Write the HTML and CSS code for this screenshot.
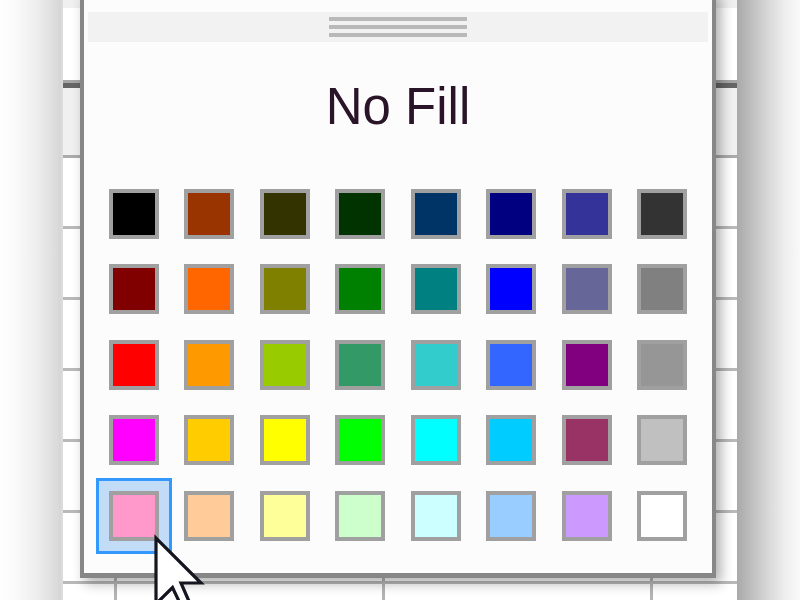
FILE: index.html
```html
<!DOCTYPE html>
<html>
<head>
<meta charset="utf-8">
<link rel="stylesheet" href="styles.css">
</head>
<body>
<div class="screen">
  <div class="shade-left"></div>
  <div class="sheet">
    <div class="band-top"></div>
    <div class="band-white"></div>
    <div class="header-line"></div>
    <div class="header"></div>
    <div class="row"></div>
    <div class="row"></div>
    <div class="row"></div>
    <div class="row"></div>
    <div class="row"></div>
    <div class="row"></div>
    <div class="row"></div>

    <div class="popup">
      <div class="handle">
        <span class="grip"></span>
        <span class="grip"></span>
        <span class="grip"></span>
      </div>
      <div class="nofill">No Fill</div>
      <div class="palette">
        <div class="cell"><span class="sw" style="background:#000000"></span></div>
        <div class="cell"><span class="sw" style="background:#993300"></span></div>
        <div class="cell"><span class="sw" style="background:#333300"></span></div>
        <div class="cell"><span class="sw" style="background:#003300"></span></div>
        <div class="cell"><span class="sw" style="background:#003366"></span></div>
        <div class="cell"><span class="sw" style="background:#000080"></span></div>
        <div class="cell"><span class="sw" style="background:#333399"></span></div>
        <div class="cell"><span class="sw" style="background:#333333"></span></div>

        <div class="cell"><span class="sw" style="background:#800000"></span></div>
        <div class="cell"><span class="sw" style="background:#ff6600"></span></div>
        <div class="cell"><span class="sw" style="background:#808000"></span></div>
        <div class="cell"><span class="sw" style="background:#008000"></span></div>
        <div class="cell"><span class="sw" style="background:#008080"></span></div>
        <div class="cell"><span class="sw" style="background:#0000ff"></span></div>
        <div class="cell"><span class="sw" style="background:#666699"></span></div>
        <div class="cell"><span class="sw" style="background:#808080"></span></div>

        <div class="cell"><span class="sw" style="background:#ff0000"></span></div>
        <div class="cell"><span class="sw" style="background:#ff9900"></span></div>
        <div class="cell"><span class="sw" style="background:#99cc00"></span></div>
        <div class="cell"><span class="sw" style="background:#339966"></span></div>
        <div class="cell"><span class="sw" style="background:#33cccc"></span></div>
        <div class="cell"><span class="sw" style="background:#3366ff"></span></div>
        <div class="cell"><span class="sw" style="background:#800080"></span></div>
        <div class="cell"><span class="sw" style="background:#969696"></span></div>

        <div class="cell"><span class="sw" style="background:#ff00ff"></span></div>
        <div class="cell"><span class="sw" style="background:#ffcc00"></span></div>
        <div class="cell"><span class="sw" style="background:#ffff00"></span></div>
        <div class="cell"><span class="sw" style="background:#00ff00"></span></div>
        <div class="cell"><span class="sw" style="background:#00ffff"></span></div>
        <div class="cell"><span class="sw" style="background:#00ccff"></span></div>
        <div class="cell"><span class="sw" style="background:#993366"></span></div>
        <div class="cell"><span class="sw" style="background:#c0c0c0"></span></div>

        <div class="cell selected"><span class="sw" style="background:#ff99cc"></span></div>
        <div class="cell"><span class="sw" style="background:#ffcc99"></span></div>
        <div class="cell"><span class="sw" style="background:#ffff99"></span></div>
        <div class="cell"><span class="sw" style="background:#ccffcc"></span></div>
        <div class="cell"><span class="sw" style="background:#ccffff"></span></div>
        <div class="cell"><span class="sw" style="background:#99ccff"></span></div>
        <div class="cell"><span class="sw" style="background:#cc99ff"></span></div>
        <div class="cell"><span class="sw" style="background:#ffffff"></span></div>
      </div>
    </div>
  </div>
  <div class="shade-right"></div>
</div>

<svg class="cursor" width="60" height="80" viewBox="0 0 60 80">
  <polygon points="2,2 2,68 18.5,51.5 31,78 39,74.5 27,47 47,47" fill="#ffffff" stroke="#15151f" stroke-width="3.2" stroke-linejoin="miter"/>
</svg>
</body>
</html>
```

FILE: styles.css
```css
html, body {
  margin: 0;
  padding: 0;
  width: 800px;
  height: 600px;
  overflow: hidden;
  background: #ffffff;
}

.screen {
  display: flex;
  width: 800px;
  height: 600px;
  overflow: hidden;
}

.shade-left {
  width: 63px;
  flex: none;
  background: linear-gradient(to right, #fefefe 0, #fbfbfb 14px, #eeeeee 36px, #dcdcdc 56px, #d6d6d6 60px, #dedede 63px);
}

.shade-right {
  width: 63px;
  flex: none;
  background: linear-gradient(to right, #a9a9a9 0, #c4c4c4 18px, #dcdcdc 34px, #eeeeee 48px, #f9f9f9 63px);
}

.sheet {
  position: relative;
  flex: 1;
  display: flex;
  flex-direction: column;
  background: #ffffff;
}

.sheet > div {
  flex: none;
}

.band-top {
  height: 8px;
  background: #f0f0f0;
}

.band-white {
  height: 72px;
  background: #ffffff;
}

.header-line {
  height: 3px;
  background: #a6a6a6;
  border-bottom: 5px solid #666666;
}

.header {
  height: 67px;
  background: #f0f0f0;
  border-bottom: 3px solid #ababab;
}

.row {
  height: 68px;
  border-bottom: 3px solid #b9b9b9;
  background-image: repeating-linear-gradient(to right, transparent 0, transparent 51px, #b4b4b4 51px, #b4b4b4 54px, transparent 54px, transparent 268px);
}

.sheet > .popup {
  position: absolute;
  left: 17px;
  top: -10px;
  width: 636px;
  height: 588px;
  box-sizing: border-box;
  border: 4px solid #878787;
  border-bottom-width: 5px;
  background: #fcfcfc;
  padding: 18px 4px 0 4px;
  box-shadow: 5px 5px 12px rgba(0, 0, 0, 0.32);
  display: flex;
  flex-direction: column;
}

.handle {
  height: 30px;
  background: #f2f2f2;
  display: flex;
  flex-direction: column;
  align-items: center;
  justify-content: center;
  gap: 4px;
}

.grip {
  display: block;
  width: 138px;
  height: 4px;
  background: #b9b9b9;
}

.nofill {
  margin-top: 35px;
  font-family: "Liberation Sans", Arial, sans-serif;
  font-size: 51px;
  line-height: 60px;
  text-align: center;
  color: #2a1428;
}

.palette {
  margin-top: 39px;
  display: grid;
  grid-template-columns: repeat(8, 75.43px);
  grid-auto-rows: 75.5px;
  justify-content: center;
}

.cell {
  display: flex;
  align-items: center;
  justify-content: center;
  box-sizing: border-box;
}

.cell.selected {
  border: 3px solid #3399ff;
  background: #c2dcf8;
}

.sw {
  display: block;
  width: 50px;
  height: 50px;
  box-sizing: border-box;
  border: 4px solid #a0a0a0;
}

.cursor {
  position: absolute;
  left: 154px;
  top: 536px;
  overflow: visible;
}
```
